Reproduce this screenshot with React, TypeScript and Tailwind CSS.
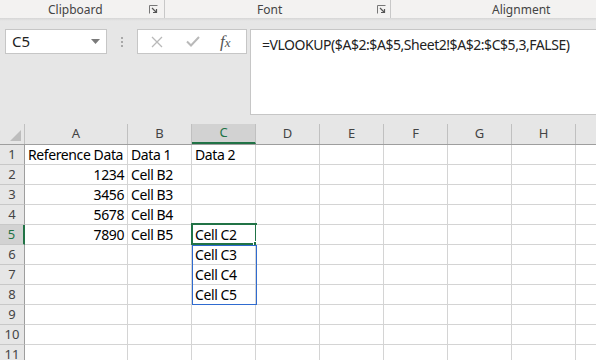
import React from "react";

const cols = ["A", "B", "C", "D", "E", "F", "G", "H", ""];
const widths = [103, 64, 64, 64, 64, 64, 64, 64, 40];

type Cell = { t?: string; right?: boolean };
const data: Record<number, Cell[]> = {
  1: [{ t: "Reference Data" }, { t: "Data 1" }, { t: "Data 2" }],
  2: [{ t: "1234", right: true }, { t: "Cell B2" }],
  3: [{ t: "3456", right: true }, { t: "Cell B3" }],
  4: [{ t: "5678", right: true }, { t: "Cell B4" }],
  5: [{ t: "7890", right: true }, { t: "Cell B5" }, { t: "Cell C2" }],
  6: [{}, {}, { t: "Cell C3" }],
  7: [{}, {}, { t: "Cell C4" }],
  8: [{}, {}, { t: "Cell C5" }],
};

function Launcher() {
  return (
    <svg width="9" height="9" viewBox="0 0 9 9" className="shrink-0">
      <path d="M0.5 8.5V0.5H8.5" fill="none" stroke="#777" strokeWidth="1" />
      <path d="M3 3L7.5 7.5M7.5 4V7.5H4" fill="none" stroke="#555" strokeWidth="1.2" />
    </svg>
  );
}

export default function App() {
  const font = { fontFamily: '"Noto Sans", "Open Sans", sans-serif' };
  return (
    <div className="w-[596px] h-[360px] overflow-hidden bg-[#e6e6e6] relative" style={font}>
      {/* Ribbon group labels */}
      <div className="h-[18px] bg-[#f3f2f1] flex text-[12px] text-[#444] leading-[18px]">
        <div className="w-[165px] shrink-0 flex items-center border-r border-[#c8c8c8] pt-[2px]">
          <div className="w-[48px] shrink-0" />
          <span className="flex-1">Clipboard</span>
          <div className="mr-[6px] -mt-[1px]">
            <Launcher />
          </div>
        </div>
        <div className="w-[226px] shrink-0 flex items-center border-r border-[#c8c8c8] pt-[2px]">
          <div className="w-[92px] shrink-0" />
          <span className="flex-1">Font</span>
          <div className="mr-[4px] -mt-[1px]">
            <Launcher />
          </div>
        </div>
        <div className="flex-1 flex items-center pt-[2px]">
          <div className="w-[101px] shrink-0" />
          <span>Alignment</span>
        </div>
      </div>
      <div className="h-[3px] bg-gradient-to-b from-[#d6d6d6] to-[#e6e6e6]" />

      {/* Formula bar */}
      <div className="flex items-start pt-[8px] h-[103px]">
        <div className="ml-[5px] w-[102px] h-[25px] bg-white border border-[#c6c6c6] flex items-center justify-between pl-[6px] pr-[6px] text-[15px] text-[#222]">
          <span>C5</span>
          <svg width="9" height="5" viewBox="0 0 9 5">
            <path d="M0 0H9L4.5 5Z" fill="#7a7a7a" />
          </svg>
        </div>
        <div className="w-[30px] h-[25px] flex flex-col items-center justify-center gap-[2px]">
          <div className="w-[2px] h-[2px] bg-[#a8a8a8]" />
          <div className="w-[2px] h-[2px] bg-[#a8a8a8]" />
          <div className="w-[2px] h-[2px] bg-[#a8a8a8]" />
        </div>
        <div className="w-[110px] h-[25px] bg-white border border-[#c6c6c6] flex items-center">
          <svg width="12" height="12" viewBox="0 0 12 12" className="ml-[13px]">
            <path d="M1 1L11 11M11 1L1 11" stroke="#b9b9b9" strokeWidth="1.3" />
          </svg>
          <svg width="14" height="11" viewBox="0 0 14 11" className="ml-[23px]">
            <path d="M1 5.5L5 9.5L13 1" fill="none" stroke="#b9b9b9" strokeWidth="2" />
          </svg>
          <span
            className="ml-[20px] text-[17px] italic text-[#555] leading-none"
            style={{ fontFamily: '"Liberation Serif", "DejaVu Serif", serif' }}
          >
            f<span className="text-[13px]">x</span>
          </span>
        </div>
        <div className="ml-[3px] flex-1 h-[86px] bg-white border border-[#c6c6c6] border-r-0 pl-[11px] pt-[4px] text-[14px] tracking-[-0.45px] text-[#222]">
          =VLOOKUP($A$2:$A$5,Sheet2!$A$2:$C$5,3,FALSE)
        </div>
      </div>

      {/* Grid */}
      <div className="relative">
        {/* header row */}
        <div className="flex h-[21px] bg-[#e6e6e6] border-b border-[#9e9e9e] text-[13px] text-[#444]">
          <div className="w-[25px] shrink-0 border-r border-[#c0c0c0] relative">
            <svg width="11" height="11" viewBox="0 0 11 11" className="absolute right-[3px] bottom-[3px]">
              <path d="M11 0V11H0Z" fill="#bdbdbd" />
            </svg>
          </div>
          {cols.map((c, i) => (
            <div
              key={i}
              className={
                "shrink-0 flex items-center justify-center border-r border-[#c0c0c0] " +
                (c === "C" ? "bg-[#d2d2d2] text-[#217346] border-b-2 border-b-[#217346]" : "")
              }
              style={{ width: widths[i] }}
            >
              {c}
            </div>
          ))}
        </div>
        {Array.from({ length: 11 }, (_, r) => r + 1).map((r) => {
          const row = data[r] || [];
          return (
            <div key={r} className="flex h-[20px] text-[14px] tracking-[-0.4px] text-black">
              <div
                className={
                  "w-[25px] shrink-0 flex items-center justify-center text-[13px] tracking-normal border-b border-[#c8c8c8] " +
                  (r === 5
                    ? "bg-[#d2d2d2] text-[#217346] border-r-2 border-r-[#217346]"
                    : "bg-[#e6e6e6] text-[#444] border-r border-r-[#9e9e9e]")
                }
              >
                {r}
              </div>
              {widths.map((w, i) => {
                const cell = row[i] || {};
                return (
                  <div
                    key={i}
                    className={
                      "shrink-0 bg-white border-r border-b border-[#d4d4d4] flex items-center px-[3px] whitespace-nowrap leading-none relative " +
                      (cell.right ? "justify-end" : "")
                    }
                    style={{ width: w }}
                  >
                    {cell.t}
                    {r === 5 && i === 2 && (
                      <div className="absolute -top-[2px] -left-[1px] -right-[2px] -bottom-[1px] border-2 border-[#217346]">
                        <div className="absolute -right-[4px] -bottom-[4px] w-[6px] h-[6px] bg-[#217346] border border-white" />
                      </div>
                    )}
                  </div>
                );
              })}
            </div>
          );
        })}
        {/* copy/spill outline */}
        <div className="absolute left-[192px] top-[121px] w-[65px] h-[60px] border border-[#2f6bd0] pointer-events-none" />
      </div>
    </div>
  );
}
